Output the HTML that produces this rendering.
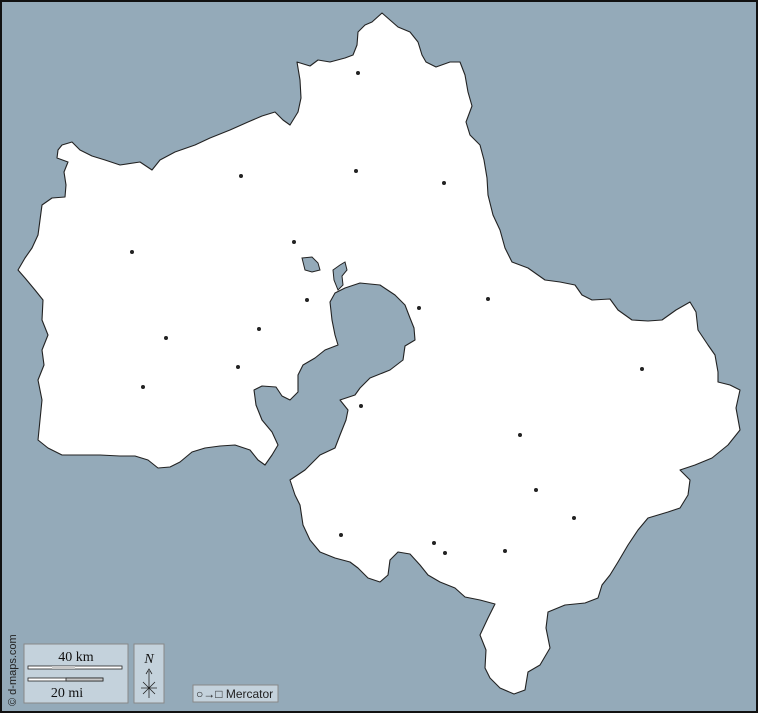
<!DOCTYPE html>
<html><head><meta charset="utf-8"><style>
html,body{margin:0;padding:0;background:#94aab9}
svg{display:block}
</style></head><body>
<svg width="758" height="713" viewBox="0 0 758 713" xmlns="http://www.w3.org/2000/svg">
<rect x="0" y="0" width="758" height="713" fill="#94aab9"/>
<path fill="#fff" stroke="#222" stroke-width="1.1" stroke-linejoin="round" d="
M58,150 L62,145 L72,142 L80,150 L92,156 L105,160 L120,165 L140,162 L152,170 L160,160 L175,152 L195,145 L210,138 L230,130 L248,122 L262,116 L275,112 L283,120 L290,125 L298,112 L301,98 L300,80 L297,62 L310,66 L318,60 L330,62 L345,58 L353,55 L357,45 L358,32 L365,25 L372,22 L382,13 L390,20 L398,27 L410,32 L418,42 L422,55 L426,62 L436,67 L450,62 L460,62 L465,75 L468,92 L472,106 L466,122 L470,135 L480,145 L484,160 L487,178 L488,195 L493,215 L500,230 L505,248 L512,262 L528,268 L545,280 L560,282 L575,285 L582,295 L592,300 L610,299 L618,310 L632,320 L648,321 L662,320 L676,310 L690,302 L696,312 L698,330 L708,345 L715,355 L718,372 L718,382 L730,385 L740,390 L736,408 L740,430 L728,445 L712,458 L695,465 L680,470 L690,480 L688,495 L680,508 L668,512 L648,518 L638,530 L628,545 L618,562 L610,575 L602,585 L598,598 L585,603 L565,605 L548,612 L546,628 L550,648 L540,665 L528,672 L525,690 L514,694 L500,688 L490,678 L485,668 L486,650 L480,635 L488,618 L495,604 L480,600 L465,597 L455,588 L440,582 L428,575 L420,565 L410,554 L398,552 L390,560 L388,575 L380,582 L368,578 L358,568 L350,562 L335,558 L320,552 L310,540 L303,525 L300,505 L295,495 L290,480 L305,470 L320,455 L335,448 L340,435 L346,420 L348,410 L340,400 L355,395 L360,388 L370,378 L390,370 L403,360 L405,346 L415,340 L414,328 L410,318 L405,305 L395,295 L380,285 L360,283 L345,288 L335,293 L330,302 L332,320 L335,335 L338,345 L325,350 L315,358 L303,365 L298,375 L298,392 L290,400 L282,396 L276,387 L262,386 L254,390 L256,405 L262,420 L272,432 L278,445 L272,455 L265,465 L258,460 L250,450 L235,445 L220,446 L205,448 L192,452 L180,462 L170,467 L158,468 L148,460 L135,456 L120,456 L100,455 L80,455 L62,455 L48,448 L38,440 L40,420 L42,400 L38,380 L44,365 L42,350 L48,335 L42,320 L43,300 L35,290 L25,278 L18,270 L25,258 L32,248 L38,235 L40,220 L42,205 L52,198 L65,197 L66,185 L64,172 L68,162 L57,158 Z"/>
<path fill="#94aab9" stroke="#222" stroke-width="1" d="M302,258 L312,257 L318,263 L320,270 L312,272 L305,270 Z"/>
<path fill="#94aab9" stroke="#222" stroke-width="1" d="M333,270 L340,265 L345,262 L347,270 L342,276 L343,285 L338,290 L334,280 Z"/>
<g fill="#222">
<circle cx="358" cy="73" r="2"/><circle cx="241" cy="176" r="2"/><circle cx="356" cy="171" r="2"/><circle cx="444" cy="183" r="2"/>
<circle cx="132" cy="252" r="2"/><circle cx="294" cy="242" r="2"/><circle cx="307" cy="300" r="2"/><circle cx="419" cy="308" r="2"/>
<circle cx="488" cy="299" r="2"/><circle cx="259" cy="329" r="2"/><circle cx="166" cy="338" r="2"/><circle cx="238" cy="367" r="2"/>
<circle cx="143" cy="387" r="2"/><circle cx="642" cy="369" r="2"/><circle cx="361" cy="406" r="2"/><circle cx="520" cy="435" r="2"/>
<circle cx="536" cy="490" r="2"/><circle cx="574" cy="518" r="2"/><circle cx="341" cy="535" r="2"/><circle cx="434" cy="543" r="2"/>
<circle cx="445" cy="553" r="2"/><circle cx="505" cy="551" r="2"/>
</g>
<rect x="24" y="644" width="104" height="59" fill="#c4d2dc" stroke="#888" stroke-width="1"/>
<text x="76" y="661" font-family="Liberation Serif, serif" font-size="14" text-anchor="middle" fill="#111">40 km</text>
<rect x="28" y="666" width="94" height="3" fill="#fff" stroke="#222" stroke-width="0.8"/>
<rect x="52" y="666" width="23" height="3" fill="#c8c8c8"/>
<rect x="28" y="678" width="75" height="3" fill="#fff" stroke="#222" stroke-width="0.8"/>
<rect x="66" y="678" width="37" height="3" fill="#c8c8c8" stroke="#222" stroke-width="0.8"/>
<text x="67" y="697" font-family="Liberation Serif, serif" font-size="14" text-anchor="middle" fill="#111">20 mi</text>
<rect x="134" y="644" width="30" height="59" fill="#c4d2dc" stroke="#888" stroke-width="1"/>
<text x="149" y="663" font-family="Liberation Serif, serif" font-style="italic" font-size="14" text-anchor="middle" fill="#111">N</text>
<path d="M149,671 V698 M141,688 H157 M143,682 L155,694 M155,682 L143,694 M146,674 L149,669 L152,674" stroke="#222" stroke-width="0.8" fill="none"/>
<rect x="193" y="685" width="85" height="17" fill="#c4d2dc" stroke="#888" stroke-width="1"/>
<text x="196" y="698" font-family="Liberation Sans, DejaVu Sans, sans-serif" font-size="12" fill="#222">○→□ Mercator</text>
<text transform="translate(16,706) rotate(-90)" font-family="Liberation Sans, sans-serif" font-size="11" fill="#222">© d-maps.com</text>
<rect x="1" y="1" width="756" height="711" fill="none" stroke="#111" stroke-width="2"/>
</svg>
</body></html>
